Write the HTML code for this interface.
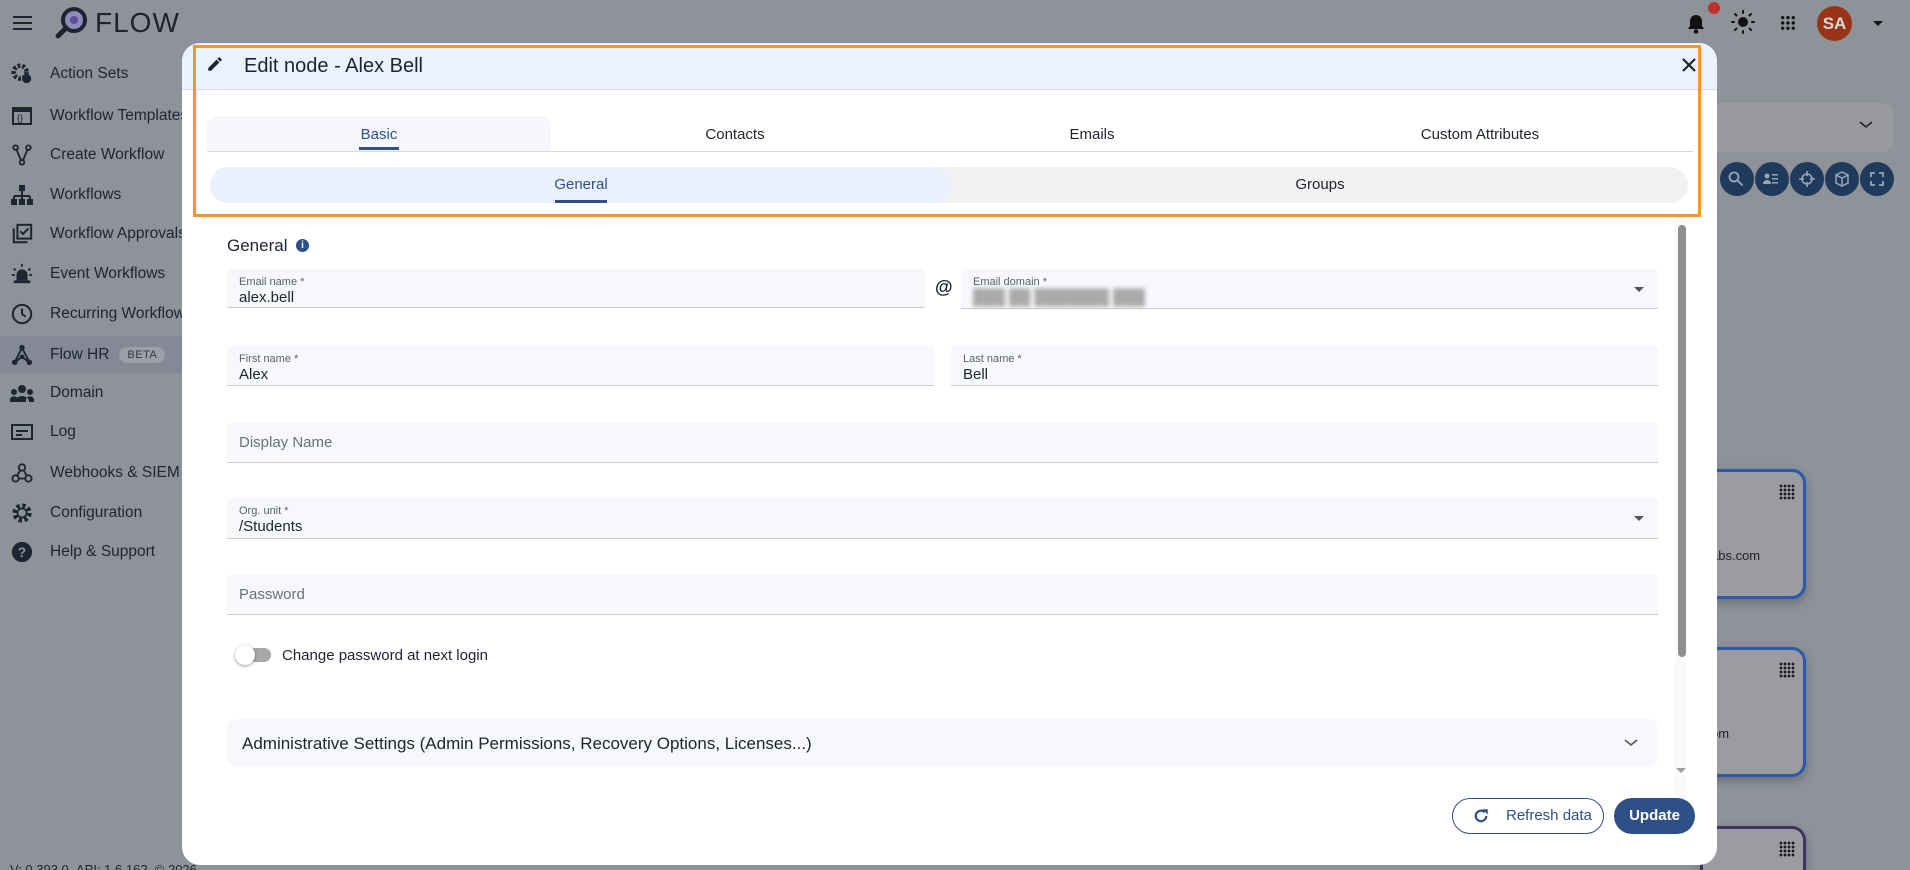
<!DOCTYPE html>
<html style="overflow:hidden;width:1910px;height:870px"><head><meta charset="utf-8"><style>
*{box-sizing:border-box;margin:0;padding:0}
body{width:1910px;height:870px;overflow:hidden;background:#8e9299;font-family:"Liberation Sans",sans-serif;position:relative;color:#1d2330}
.abs{position:absolute}
.nav{position:absolute;left:0;width:200px;height:40px;display:flex;align-items:center;font-size:15.5px;color:#1d2533}
.nav .ic{width:24px;height:24px;margin-left:10px;margin-right:16px;display:flex;align-items:center;justify-content:center}
.nav span.t{white-space:nowrap}
.modal{position:absolute;left:182px;top:43px;width:1535px;height:822px;background:#fff;border-radius:18px;overflow:hidden}
.fld{position:absolute;background:#f6f8fc;border-bottom:1px solid #c9ccd2;border-radius:4px 4px 0 0}
.fld .lb{position:absolute;left:12px;top:7px;font-size:11px;color:#5a5f68}
.fld .v{position:absolute;left:12px;top:20px;font-size:15px;color:#1d2330}
.fld .ph{position:absolute;left:12px;top:11px;font-size:15px;color:#6b7079}
.arr{position:absolute;width:0;height:0;border-left:5px solid transparent;border-right:5px solid transparent;border-top:5px solid #555}
.cb{position:absolute;top:162px;width:34px;height:34px;border-radius:50%;background:#203a5c}
.card{position:absolute;left:1700px;width:106px;background:#9b9ba1;border:3px solid #2c5aa8;border-radius:14px;box-shadow:0 4px 10px rgba(0,0,0,.25)}
.dots{position:absolute;width:16px;height:16px;background-image:radial-gradient(circle,#1a1a1a 1.3px,transparent 1.5px);background-size:4px 4px}
</style></head><body>
<div class="abs" style="left:13px;top:16px;width:19px;height:2px;background:#1d2330;box-shadow:0 6px 0 #1d2330,0 12px 0 #1d2330"></div>
<svg class="abs" style="left:54px;top:5px" width="36" height="36" viewBox="0 0 36 36"><circle cx="20" cy="15" r="11" fill="#8f8ab8" stroke="#1d2330" stroke-width="4"/><path d="M12 23 L4 31" stroke="#1d2330" stroke-width="5" stroke-linecap="round"/><circle cx="20" cy="15" r="4" fill="#5b4f9a"/></svg>
<div class="abs" style="left:95px;top:7px;font-size:28px;color:#1d2330;letter-spacing:1px">FLOW</div>
<div class="abs" style="left:0;top:336px;width:200px;height:37px;background:#848995"></div>
<div class="nav" style="top:54px"><div class="ic"><svg width="22" height="22" viewBox="0 0 24 24"><circle cx="10" cy="10" r="7" fill="none" stroke="#1d2533" stroke-width="5" stroke-dasharray="3 2"/><circle cx="17" cy="17" r="5" fill="#1d2533"/></svg></div><span class="t">Action Sets</span></div>
<div class="nav" style="top:96px"><div class="ic"><svg width="22" height="20"><rect x="1" y="1" width="20" height="18" fill="#1d2533"/><rect x="3" y="6" width="16" height="11" fill="#8e9299"/><text x="6" y="15" font-size="9" fill="#1d2533">{}</text></svg></div><span class="t">Workflow Templates</span></div>
<div class="nav" style="top:135px"><div class="ic"><svg width="22" height="22" viewBox="0 0 24 24" fill="none" stroke="#1d2533" stroke-width="2"><circle cx="5" cy="4" r="2.5"/><circle cx="19" cy="4" r="2.5"/><circle cx="12" cy="20" r="2.5"/><path d="M6 6l5 12M18 6l-5 12"/></svg></div><span class="t">Create Workflow</span></div>
<div class="nav" style="top:175px"><div class="ic"><svg width="22" height="20"><rect x="8" y="0" width="6" height="6" fill="#1d2533"/><path d="M11 6v5M3 11h16M3 11v3M11 11v3M19 11v3" stroke="#1d2533" stroke-width="2"/><rect x="0" y="14" width="6" height="6" fill="#1d2533"/><rect x="8" y="14" width="6" height="6" fill="#1d2533"/><rect x="16" y="14" width="6" height="6" fill="#1d2533"/></svg></div><span class="t">Workflows</span></div>
<div class="nav" style="top:214px"><div class="ic"><svg width="22" height="22" viewBox="0 0 24 24" fill="none" stroke="#1d2533" stroke-width="2.2"><path d="M3 6v15h15"/><rect x="7" y="2" width="15" height="15"/><path d="M10 9l3 3 6-6"/></svg></div><span class="t">Workflow Approvals</span></div>
<div class="nav" style="top:254px"><div class="ic"><svg width="22" height="22" viewBox="0 0 24 24"><path d="M6 19v-6a6 6 0 0112 0v6z" fill="#1d2533"/><rect x="3" y="19" width="18" height="3" fill="#1d2533"/><path d="M12 1v3M3 6l2 2M21 6l-2 2M1 13h3M20 13h3" stroke="#1d2533" stroke-width="2"/></svg></div><span class="t">Event Workflows</span></div>
<div class="nav" style="top:294px"><div class="ic"><svg width="22" height="22" viewBox="0 0 24 24" fill="none" stroke="#1d2533" stroke-width="2.2"><circle cx="12" cy="12" r="10"/><path d="M12 6v6l4 3"/></svg></div><span class="t">Recurring Workflows</span></div>
<div class="nav" style="top:335px"><div class="ic"><svg width="22" height="22" viewBox="0 0 24 24" fill="#1d2533"><circle cx="12" cy="4" r="3"/><circle cx="4" cy="20" r="3"/><circle cx="20" cy="20" r="3"/><circle cx="12" cy="14" r="2.5"/><path d="M12 4L4 20M12 4l8 16M12 14l-8 6M12 14l8 6" stroke="#1d2533" stroke-width="2"/></svg></div><span class="t">Flow HR</span><span style="margin-left:10px;background:#9a9fa8;border-radius:10px;padding:2px 8px;font-size:11px;letter-spacing:.5px;color:#333a48">BETA</span></div>
<div class="nav" style="top:373px"><div class="ic"><svg width="24" height="18" viewBox="0 0 24 18" fill="#1d2533"><circle cx="12" cy="5" r="4"/><circle cx="4" cy="8" r="3"/><circle cx="20" cy="8" r="3"/><path d="M5 18a7 6 0 0114 0zM0 18a4 4 0 018 -3v3zM24 18a4 4 0 00-8-3v3z"/></svg></div><span class="t">Domain</span></div>
<div class="nav" style="top:412px"><div class="ic"><svg width="22" height="16"><rect x="1" y="1" width="20" height="14" fill="none" stroke="#1d2533" stroke-width="2"/><path d="M5 7h12M5 11h6" stroke="#1d2533" stroke-width="2"/></svg></div><span class="t">Log</span></div>
<div class="nav" style="top:453px"><div class="ic"><svg width="22" height="22" viewBox="0 0 24 24" fill="none" stroke="#1d2533" stroke-width="2"><circle cx="12" cy="6" r="3.5"/><circle cx="5" cy="18" r="3.5"/><circle cx="19" cy="18" r="3.5"/><path d="M10 9l-4 7M14 9l3 6M8 18h8"/></svg></div><span class="t">Webhooks &amp; SIEM</span></div>
<div class="nav" style="top:493px"><div class="ic"><svg width="22" height="22" viewBox="0 0 24 24"><circle cx="12" cy="12" r="8" fill="none" stroke="#1d2533" stroke-width="5" stroke-dasharray="3.5 2.8"/><circle cx="12" cy="12" r="5" fill="none" stroke="#1d2533" stroke-width="2"/></svg></div><span class="t">Configuration</span></div>
<div class="nav" style="top:532px"><div class="ic"><svg width="22" height="22" viewBox="0 0 24 24"><circle cx="12" cy="12" r="11" fill="#1d2533"/><text x="12" y="17.5" text-anchor="middle" font-size="15" font-weight="bold" fill="#8e9299" font-family="Liberation Sans">?</text></svg></div><span class="t">Help &amp; Support</span></div>
<div class="abs" style="left:10px;top:862px;font-size:13px;color:#1d2330;white-space:nowrap">V: 0.393.0 &nbsp;API: 1.6.162 &nbsp;© 2026 ...</div>

<svg class="abs" style="left:1685px;top:11px" width="22" height="24" viewBox="0 0 22 24"><path d="M3 18h16l-2-3V10a6 6 0 00-12 0v5z" fill="#111"/><circle cx="11" cy="20.5" r="2.2" fill="#111"/></svg>
<div class="abs" style="left:1708px;top:2px;width:12px;height:12px;border-radius:50%;background:#c0302a"></div>
<svg class="abs" style="left:1731px;top:10px" width="24" height="24" viewBox="0 0 24 24"><circle cx="12" cy="12" r="5" fill="#111"/><g stroke="#111" stroke-width="2" stroke-linecap="round"><path d="M12 1v2M12 21v2M1 12h2M21 12h2M4 4l1.5 1.5M18.5 18.5L20 20M4 20l1.5-1.5M18.5 5.5L20 4"/></g></svg>
<div class="dots abs" style="left:1780px;top:15px;background-image:radial-gradient(circle,#111 1.6px,transparent 1.8px);background-size:5.3px 5.3px"></div>
<div class="abs" style="left:1817px;top:6px;width:35px;height:35px;border-radius:50%;background:#9a3417;color:#d9d9d9;font-size:17px;font-weight:bold;text-align:center;line-height:35px">SA</div>
<div class="arr" style="left:1873px;top:21px;border-top-color:#111"></div>

<div class="abs" style="left:1700px;top:103px;width:194px;height:49px;border-radius:12px;background:#999a9e"></div>
<svg class="abs" style="left:1859px;top:120px" width="14" height="10"><path d="M1 2l6 5 6-5" fill="none" stroke="#222" stroke-width="1.6"/></svg>
<div class="cb" style="left:1720px"></div><div class="cb" style="left:1755px"></div><div class="cb" style="left:1790px"></div><div class="cb" style="left:1825px"></div><div class="cb" style="left:1860px"></div>
<svg class="abs" style="left:1728px;top:171px" width="16" height="16" fill="none" stroke="#9aa5b5" stroke-width="1.8"><circle cx="6" cy="6" r="4.5"/><path d="M9.5 9.5l5 5"/></svg>
<svg class="abs" style="left:1763px;top:171px" width="16" height="16" fill="#9aa5b5"><circle cx="4" cy="5" r="2.5"/><path d="M0 13a4 4 0 018 0z"/><rect x="9" y="3" width="6" height="1.5"/><rect x="9" y="7" width="6" height="1.5"/><rect x="9" y="11" width="6" height="1.5"/></svg>
<svg class="abs" style="left:1799px;top:171px" width="16" height="16" fill="none" stroke="#9aa5b5" stroke-width="1.6"><circle cx="8" cy="8" r="5"/><path d="M8 0v5M8 11v5M0 8h5M11 8h5"/></svg>
<svg class="abs" style="left:1834px;top:171px" width="16" height="16" fill="none" stroke="#9aa5b5" stroke-width="1.5"><path d="M8 1l6 3v8l-6 3-6-3V4zM2 4l6 3 6-3M8 7v8"/></svg>
<svg class="abs" style="left:1869px;top:171px" width="16" height="16" fill="none" stroke="#9aa5b5" stroke-width="1.8"><path d="M2 6V2h4M10 2h4v4M14 10v4h-4M6 14H2v-4"/></svg>
<div class="card" style="top:469px;height:130px"><div class="dots" style="left:76px;top:12px"></div><div class="abs" style="left:8px;top:76px;font-size:13px;color:#222">abs.com</div></div>
<div class="card" style="top:647px;height:130px"><div class="dots" style="left:76px;top:12px"></div><div class="abs" style="left:8px;top:76px;font-size:13px;color:#222">om</div></div>
<div class="card" style="top:826px;height:44px;border-color:#3d3560;border-bottom:none;border-radius:14px 14px 0 0"><div class="dots" style="left:76px;top:12px"></div></div>

<div class="modal">
  <div class="abs" style="left:0;top:0;width:1535px;height:47px;background:#ebf2fd;border-bottom:1px solid #d6dae2"></div>
  <svg class="abs" style="left:24px;top:12px" width="18" height="18" viewBox="0 0 24 24"><path d="M3 17.25V21h3.75L17.81 9.94l-3.75-3.75zM20.71 7.04a1 1 0 000-1.41l-2.34-2.34a1 1 0 00-1.41 0l-1.83 1.83 3.75 3.75z" fill="#1d2330"/></svg>
  <div class="abs" style="left:62px;top:12px;font-size:20px;color:#1d2330">Edit node - Alex Bell</div>
  <svg class="abs" style="left:1499px;top:14px" width="16" height="16"><path d="M2 2l12 12M14 2L2 14" stroke="#1d2330" stroke-width="2.2"/></svg>

  <div class="abs" style="left:25px;top:73px;width:344px;height:36px;background:#f5f7fb;border-radius:10px 10px 0 0"></div>
  <div class="abs" style="left:25px;top:108px;width:1486px;height:1px;background:#d6d8dc"></div>
  <div class="abs" style="left:25px;top:83px;width:344px;text-align:center;font-size:15px;color:#2d5187">Basic</div>
  <div class="abs" style="left:177px;top:104px;width:40px;height:3px;background:#2d5187"></div>
  <div class="abs" style="left:369px;top:83px;width:368px;text-align:center;font-size:15px;color:#1d2330">Contacts</div>
  <div class="abs" style="left:720px;top:83px;width:380px;text-align:center;font-size:15px;color:#1d2330">Emails</div>
  <div class="abs" style="left:1100px;top:83px;width:396px;text-align:center;font-size:15px;color:#1d2330">Custom Attributes</div>

  <div class="abs" style="left:28px;top:124px;width:1478px;height:36px;background:#f2f2f2;border-radius:18px"></div>
  <div class="abs" style="left:28px;top:124px;width:742px;height:36px;background:#eaf1fc;border-radius:18px"></div>
  <div class="abs" style="left:28px;top:133px;width:742px;text-align:center;font-size:15px;color:#2d5187">General</div>
  <div class="abs" style="left:373px;top:157px;width:52px;height:3px;background:#2d5187"></div>
  <div class="abs" style="left:770px;top:133px;width:736px;text-align:center;font-size:15px;color:#1d2330">Groups</div>

  <div class="abs" style="left:11px;top:2px;width:1508px;height:172px;border:3px solid #f7962f"></div>

  <div class="abs" style="left:45px;top:193px;font-size:17px;color:#1d2330">General</div>
  <div class="abs" style="left:114px;top:196px;width:13px;height:13px;border-radius:50%;background:#2d5187;color:#fff;font-size:10px;font-weight:bold;text-align:center;line-height:13px">i</div>

  <div class="fld" style="left:45px;top:226px;width:698px;height:39px"><div class="lb">Email name *</div><div class="v">alex.bell</div></div>
  <div class="abs" style="left:753px;top:234px;font-size:18px;font-weight:bold;color:#1d2330">@</div>
  <div class="fld" style="left:779px;top:226px;width:697px;height:40px"><div class="lb">Email domain *</div><div class="v" style="color:#aaa;filter:blur(2px)">███ ██ ███████ ███</div><div class="arr" style="left:673px;top:18px"></div></div>

  <div class="fld" style="left:45px;top:303px;width:707px;height:40px"><div class="lb">First name *</div><div class="v">Alex</div></div>
  <div class="fld" style="left:769px;top:303px;width:707px;height:40px"><div class="lb">Last name *</div><div class="v">Bell</div></div>

  <div class="fld" style="left:45px;top:380px;width:1431px;height:40px"><div class="ph">Display Name</div></div>
  <div class="fld" style="left:45px;top:455px;width:1431px;height:41px"><div class="lb">Org. unit *</div><div class="v">/Students</div><div class="arr" style="left:1407px;top:18px"></div></div>
  <div class="fld" style="left:45px;top:532px;width:1431px;height:40px"><div class="ph">Password</div></div>

  <div class="abs" style="left:55px;top:605px;width:34px;height:14px;border-radius:7px;background:#a8a8a8"></div>
  <div class="abs" style="left:53px;top:602px;width:20px;height:20px;border-radius:50%;background:#fff;box-shadow:0 1px 3px rgba(0,0,0,.4)"></div>
  <div class="abs" style="left:100px;top:604px;font-size:15px;color:#1d2330">Change password at next login</div>

  <div class="abs" style="left:45px;top:676px;width:1431px;height:48px;background:#f6f8fc;border-radius:10px"></div>
  <div class="abs" style="left:60px;top:691px;font-size:17px;color:#1d2330">Administrative Settings (Admin Permissions, Recovery Options, Licenses...)</div>
  <svg class="abs" style="left:1442px;top:695px" width="14" height="10"><path d="M1 2l6 5 6-5" fill="none" stroke="#555" stroke-width="1.6"/></svg>

  <div class="abs" style="left:1493px;top:175px;width:10px;height:600px;background:#fafafa"></div>
  <div class="abs" style="left:1496px;top:182px;width:8px;height:432px;background:#8e8e8e;border-radius:4px"></div>
  <div class="arr" style="left:1494px;top:725px;border-top-color:#a0a0a0"></div>

  <div class="abs" style="left:1270px;top:755px;width:152px;height:36px;border:1px solid #2d5187;border-radius:18px"></div>
  <svg class="abs" style="left:1290px;top:764px" width="18" height="18" viewBox="0 0 24 24"><path d="M19 12a7 7 0 11-2-5" fill="none" stroke="#2d5187" stroke-width="3"/><path d="M14 3h7v7z" fill="#2d5187"/></svg>
  <div class="abs" style="left:1324px;top:764px;font-size:15px;color:#2d5187">Refresh data</div>
  <div class="abs" style="left:1432px;top:755px;width:81px;height:36px;background:#2d5187;border-radius:18px;color:#fff;font-size:15px;font-weight:bold;text-align:center;line-height:36px">Update</div>
</div>
</body></html>
